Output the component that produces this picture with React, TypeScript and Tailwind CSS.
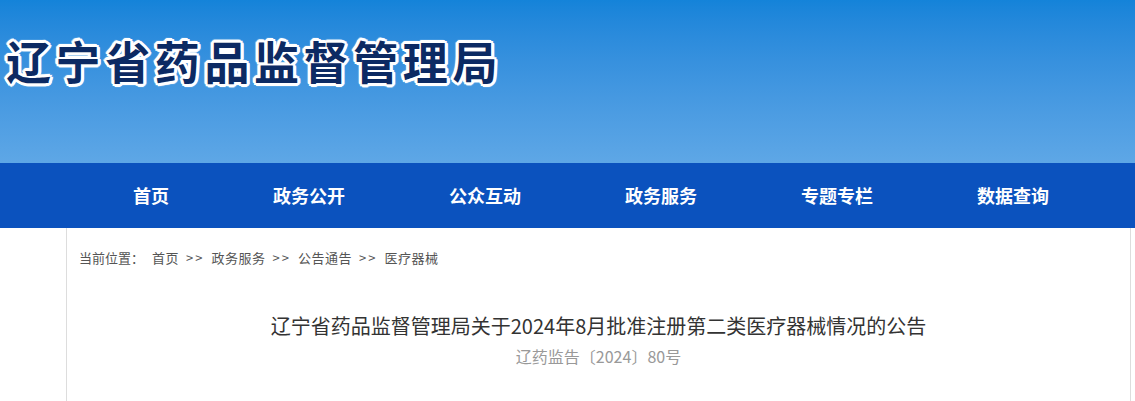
import React from 'react';

const navItems = ['首页', '政务公开', '公众互动', '政务服务', '专题专栏', '数据查询'];

const crumbs = ['首页', '政务服务', '公告通告', '医疗器械'];

export default function App() {
  return (
    <div className="w-[1135px] h-[401px] overflow-hidden bg-white font-['Noto_Sans_CJK_SC','Noto_Sans',sans-serif]">
      {/* Banner */}
      <div className="h-[163px] bg-gradient-to-b from-[#1483d9] to-[#5ea7e6] pt-[27px] pl-[6px]">
        <h1 className="text-[45px] leading-[68px] font-bold tracking-[4.6px] text-[#0c2a63] [text-shadow:0_0_2px_#fff,3px_0_0_#fff,-3px_0_0_#fff,0_3px_0_#fff,0_-3px_0_#fff,2px_2px_0_#fff,-2px_-2px_0_#fff,2px_-2px_0_#fff,-2px_2px_0_#fff,3px_1px_1px_#fff,-3px_-1px_1px_#fff,1px_3px_1px_#fff,-1px_-3px_1px_#fff]">
          辽宁省药品监督管理局
        </h1>
      </div>

      {/* Nav */}
      <nav className="h-[65px] bg-[#0b52be] flex items-center pl-[81px]">
        {navItems.map((item, i) => (
          <a
            key={item}
            className={
              (i === 0 ? 'w-[140px]' : 'w-[176px]') +
              ' text-center text-white text-[18px] font-bold leading-[65px]'
            }
          >
            {item}
          </a>
        ))}
      </nav>

      {/* Content */}
      <div className="ml-[66px] w-[1065px] h-[173px] border-x border-[#dddddd]">
        <div className="pl-[12px] pt-[20px] text-[13px] leading-[20px] text-[#555]">
          <span>当前位置：</span>
          <span className="ml-[8px]">
            {crumbs.map((c, i) => (
              <span key={c}>
                {i > 0 && <span className="mx-[7px] tracking-[2px]">&gt;&gt;</span>}
                <span className="tracking-[0.5px]">{c}</span>
              </span>
            ))}
          </span>
        </div>
        <h2 className="mt-[44px] text-center text-[20px] leading-[28px] text-[#333]">
          辽宁省药品监督管理局关于2024年8月批准注册第二类医疗器械情况的公告
        </h2>
        <p className="mt-[5px] text-center text-[16px] leading-[22px] text-[#999]">
          辽药监告〔2024〕80号
        </p>
      </div>
    </div>
  );
}
